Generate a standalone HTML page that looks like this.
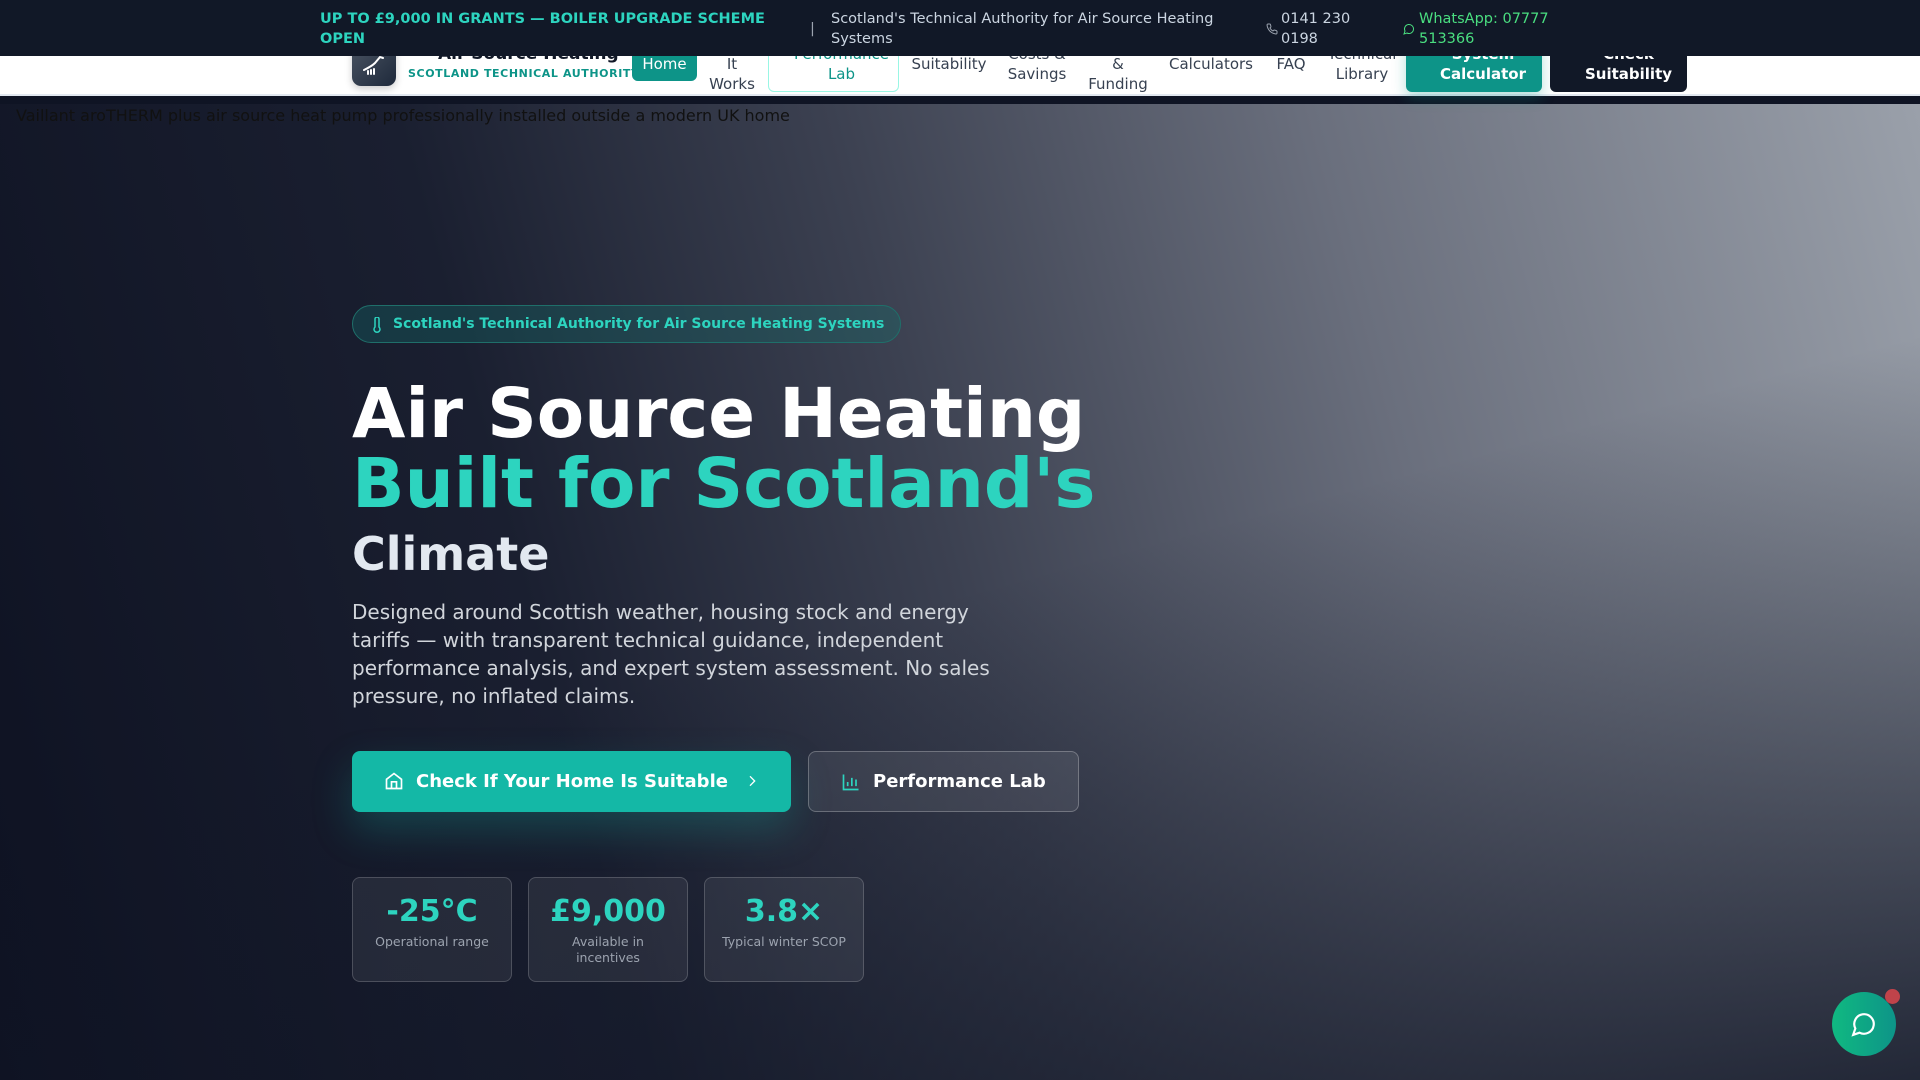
<!DOCTYPE html>
<html><head><meta charset="utf-8"><style>
*{margin:0;padding:0;box-sizing:border-box}
body{width:1920px;height:1080px;overflow:hidden;font-family:"DejaVu Sans","Liberation Sans",sans-serif;background:#0f1424;position:relative}
.top{position:absolute;left:0;top:0;width:1920px;height:56px;background:#111827;z-index:5;color:#cbd5e1;font-size:14.5px;line-height:20px}
.top div{position:absolute}
.nav{position:absolute;left:0;top:0;width:1920px;height:96px;background:#fff;border-bottom:2px solid #e2e8f0;z-index:3}
.nav .it{position:absolute;top:0;height:128px;display:flex;align-items:center;justify-content:center;text-align:center;font-size:15px;line-height:20px;color:#374151}
.hero{position:absolute;left:0;top:104px;width:1920px;height:976px;
background:linear-gradient(165deg,rgba(15,20,36,0) 50%,rgba(17,22,38,.85) 100%),
linear-gradient(75deg,#0e1222 0%,#1a1f30 30%,#3c4151 50%,#6a6f7d 72%,#9aa0aa 100%)}
.alt{position:absolute;left:16px;top:106px;font-size:16px;color:#111;z-index:2}
.badge{position:absolute;left:352px;top:305px;width:549px;height:38px;border:1px solid #1f6f6a;background:rgba(20,110,105,.35);border-radius:19px;color:#2dd4bf;font-weight:bold;font-size:14px;line-height:36px;padding-left:40px;white-space:nowrap}
h1{position:absolute;left:352px;top:379px;font-size:69px;line-height:70px;font-weight:bold;color:#fff;white-space:nowrap}
h1 .t{color:#2dd4bf;display:block}
.cl{position:absolute;left:352px;top:527px;font-size:46px;font-weight:bold;color:#e2e8f0}
.p{position:absolute;left:352px;top:598px;width:650px;font-size:20px;line-height:28px;color:#d1d5db}
.b1{position:absolute;left:352px;top:751px;width:439px;height:61px;background:#14b8a6;border-radius:8px;color:#fff;font-weight:bold;font-size:18px;line-height:61px;padding-left:64px;box-shadow:0 18px 40px rgba(20,184,166,.25)}
.b2{position:absolute;left:808px;top:751px;width:271px;height:61px;background:rgba(255,255,255,.08);border:1px solid rgba(255,255,255,.25);border-radius:8px;color:#fff;font-weight:bold;font-size:18px;line-height:59px;padding-left:64px}
.st{position:absolute;top:877px;width:160px;height:105px;border:1px solid rgba(255,255,255,.18);background:rgba(255,255,255,.07);border-radius:8px;text-align:center;color:#2dd4bf}
.st b{display:block;font-size:30px;margin-top:16px;line-height:36px}
.st span{display:block;color:#9ca3af;font-size:12.5px;line-height:16px;margin-top:4px}
.chat{position:absolute;left:1832px;top:992px;width:64px;height:64px;border-radius:50%;background:linear-gradient(90deg,#10b981,#0d9488)}
.dot{position:absolute;left:1885px;top:989px;width:15px;height:15px;border-radius:50%;background:#c0434a}
</style></head><body>
<div class="top">
<div style="left:320px;top:9px;width:480px;color:#2dd4bf;font-weight:bold">UP TO £9,000 IN GRANTS — BOILER UPGRADE SCHEME OPEN</div>
<div style="left:810px;top:19px;color:#9ca3af">|</div>
<div style="left:831px;top:9px;width:390px">Scotland's Technical Authority for Air Source Heating Systems</div>
<div style="left:1266px;top:21px"><svg width="12" height="12" viewBox="0 0 24 24" fill="none" stroke="#9ca3af" stroke-width="2"><path d="M22 16.9v3a2 2 0 0 1-2.2 2A19.8 19.8 0 0 1 2.1 4.2 2 2 0 0 1 4.1 2h3a2 2 0 0 1 2 1.7l.7 3a2 2 0 0 1-.6 2L7.9 10a16 16 0 0 0 6 6l1.3-1.3a2 2 0 0 1 2-.5l3 .7a2 2 0 0 1 1.7 2z"/></svg></div>
<div style="left:1281px;top:9px;width:80px">0141 230 0198</div>
<div style="left:1403px;top:21px"><svg width="12" height="12" viewBox="0 0 24 24" fill="none" stroke="#4ade80" stroke-width="2"><path d="M7.9 20A9 9 0 1 0 4 16.1L2 22z"/></svg></div>
<div style="left:1419px;top:9px;width:140px;color:#4ade80">WhatsApp: 07777 513366</div>
</div>
<div class="nav">
<div style="position:absolute;left:352px;top:42px;width:44px;height:44px;border-radius:9px;background:linear-gradient(135deg,#4b5563,#1e293b);box-shadow:0 3px 8px rgba(0,0,0,.2)"><svg style="position:absolute;left:8px;top:8px" width="28" height="28" viewBox="0 0 28 28" fill="none" stroke="#fff" stroke-width="2" stroke-linecap="round"><path d="M4 20c4-2 8-4 11-7M15 13l5-6 3 1M8 21v3M11 20v4M14 19v5"/></svg></div>
<div style="position:absolute;left:438px;top:44px;font-weight:bold;font-size:17px;color:#111827">Air Source Heating</div>
<div style="position:absolute;left:408px;top:67px;font-weight:bold;font-size:11px;letter-spacing:0.6px;color:#0d9488;white-space:nowrap;z-index:2">SCOTLAND TECHNICAL AUTHORITY</div>
<div style="position:absolute;left:632px;top:48px;width:65px;height:33px;background:#0d9488;border-radius:6px;color:#fff;font-size:15px;line-height:33px;text-align:center">Home</div>
<div class="it" style="left:700px;width:64px">How<br>It<br>Works</div>
<div style="position:absolute;left:768px;top:40px;width:131px;height:52px;border:1px solid #99f6e4;border-radius:6px"></div>
<div class="it" style="left:768px;width:131px;color:#0d9488;padding-left:16px">Performance<br>Lab</div>
<div class="it" style="left:900px;width:98px">Suitability</div>
<div class="it" style="left:997px;width:80px">Costs &amp;<br>Savings</div>
<div class="it" style="left:1080px;width:76px">Grants<br>&amp;<br>Funding</div>
<div class="it" style="left:1160px;width:102px">Calculators</div>
<div class="it" style="left:1266px;width:50px">FAQ</div>
<div class="it" style="left:1320px;width:84px">Technical<br>Library</div>
<div style="position:absolute;left:1406px;top:40px;width:136px;height:52px;background:#0d9488;border-radius:6px;color:#fff;font-weight:bold;font-size:15px;line-height:20px;text-align:center;padding:4px 0 0 18px;box-shadow:0 6px 14px rgba(13,148,136,.3)">System<br>Calculator</div>
<div style="position:absolute;left:1550px;top:40px;width:137px;height:52px;background:#111827;border-radius:6px;color:#fff;font-weight:bold;font-size:15px;line-height:20px;text-align:center;padding:4px 0 0 20px">Check<br>Suitability</div>
</div>
<div class="hero"></div>
<div class="alt">Vaillant aroTHERM plus air source heat pump professionally installed outside a modern UK home</div>
<div class="badge"><svg style="position:absolute;left:18px;top:11px" width="12" height="16" viewBox="0 0 12 16" fill="none" stroke="#2dd4bf" stroke-width="1.5"><path d="M4 2a2 2 0 0 1 4 0v8a3 3 0 1 1-4 0z"/></svg>Scotland's Technical Authority for Air Source Heating Systems</div>
<h1>Air Source Heating<span class="t">Built for Scotland's</span></h1>
<div class="cl">Climate</div>
<div class="p">Designed around Scottish weather, housing stock and energy tariffs — with transparent technical guidance, independent performance analysis, and expert system assessment. No sales pressure, no inflated claims.</div>
<div class="b1"><svg style="position:absolute;left:32px;top:20px" width="20" height="20" viewBox="0 0 24 24" fill="none" stroke="#fff" stroke-width="2"><path d="M3 10l9-7 9 7v11H3z M9 21v-8h6v8"/></svg>Check If Your Home Is Suitable<svg style="position:absolute;left:392px;top:22px" width="16" height="16" viewBox="0 0 24 24" fill="none" stroke="#fff" stroke-width="2"><path d="M9 5l7 7-7 7"/></svg></div>
<div class="b2"><svg style="position:absolute;left:32px;top:20px" width="20" height="20" viewBox="0 0 24 24" fill="none" stroke="#2dd4bf" stroke-width="2"><path d="M3 3v18h18 M8 17v-5 M13 17V7 M18 17v-8"/></svg>Performance Lab</div>
<div class="st" style="left:352px"><b>-25°C</b><span>Operational range</span></div>
<div class="st" style="left:528px"><b>£9,000</b><span>Available in<br>incentives</span></div>
<div class="st" style="left:704px"><b>3.8×</b><span>Typical winter SCOP</span></div>
<div class="chat"><svg style="position:absolute;left:19px;top:19px" width="26" height="26" viewBox="0 0 24 24" fill="none" stroke="#fff" stroke-width="2"><path d="M7.9 20A9 9 0 1 0 4 16.1L2 22z"/></svg></div>
<div class="dot"></div>
</body></html>
